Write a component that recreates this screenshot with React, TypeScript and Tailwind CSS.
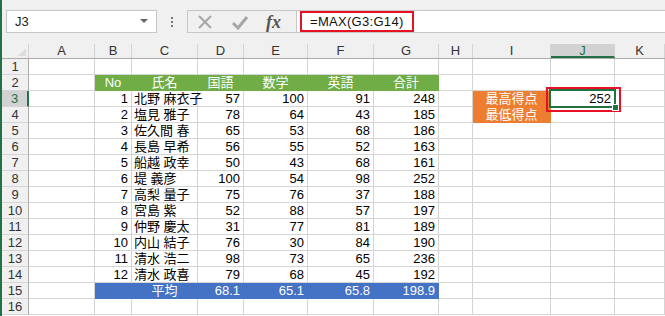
import React from "react";

const cols = [
  { key: "A", w: 66 },
  { key: "B", w: 37 },
  { key: "C", w: 66 },
  { key: "D", w: 46 },
  { key: "E", w: 64 },
  { key: "F", w: 66 },
  { key: "G", w: 65 },
  { key: "H", w: 34 },
  { key: "I", w: 78 },
  { key: "J", w: 64 },
  { key: "K", w: 50 },
];

const students: [number, string, number, number, number, number][] = [
  [1, "北野 麻衣子", 57, 100, 91, 248],
  [2, "塩見 雅子", 78, 64, 43, 185],
  [3, "佐久間 春", 65, 53, 68, 186],
  [4, "長島 早希", 56, 55, 52, 163],
  [5, "船越 政幸", 50, 43, 68, 161],
  [6, "堤 義彦", 100, 54, 98, 252],
  [7, "高梨 量子", 75, 76, 37, 188],
  [8, "宮島 紫", 52, 88, 57, 197],
  [9, "仲野 慶太", 31, 77, 81, 189],
  [10, "内山 結子", 76, 30, 84, 190],
  [11, "清水 浩二", 98, 73, 65, 236],
  [12, "清水 政喜", 79, 68, 45, 192],
];

type CellInfo = { text?: string; align?: "l" | "c" | "r"; fill?: "green" | "blue" | "orange" };

function getCell(row: number, col: string): CellInfo {
  const heads: Record<string, string> = { B: "No", C: "氏名", D: "国語", E: "数学", F: "英語", G: "合計" };
  if (row === 2 && heads[col]) return { text: heads[col], align: "c", fill: "green" };
  if (row >= 3 && row <= 14) {
    const s = students[row - 3];
    const idx = "BCDEFG".indexOf(col);
    if (idx === 1) return { text: s[1], align: "l" };
    if (idx >= 0) return { text: String(s[idx]), align: "r" };
  }
  if (row === 15) {
    const avg: Record<string, string> = { B: "", C: "平均", D: "68.1", E: "65.1", F: "65.8", G: "198.9" };
    if (col in avg) return { text: avg[col], align: col === "C" ? "c" : "r", fill: "blue" };
  }
  if (col === "I" && row === 3) return { text: "最高得点", align: "c", fill: "orange" };
  if (col === "I" && row === 4) return { text: "最低得点", align: "c", fill: "orange" };
  if (col === "J" && row === 3) return { text: "252", align: "r" };
  return {};
}

const fillCls = {
  green: "bg-[#70ad47] border-[#70ad47] text-white",
  blue: "bg-[#4472c4] border-[#4472c4] text-white",
  orange: "bg-[#ed7d31] border-[#ed7d31] text-white",
};

const alignCls = { l: "justify-start pl-[2px]", c: "justify-center", r: "justify-end pr-[3px]" };

function Toolbar() {
  return (
    <div className="h-[44px] bg-[#f0f0f0] flex items-start pt-[10px] shrink-0">
      <div className="ml-[4px] w-[151px] h-[23px] bg-white border border-[#c6c6c6] flex items-center pl-[8px] pr-[8px] text-[13px] text-[#222]">
        <span className="flex-1">J3</span>
        <svg width="8" height="5" viewBox="0 0 8 5">
          <path d="M0 0 L8 0 L4 4 Z" fill="#666" />
        </svg>
      </div>
      <div className="w-[30px] h-[23px] flex flex-col items-center justify-center gap-[2px]">
        <div className="w-[2px] h-[2px] bg-[#777]" />
        <div className="w-[2px] h-[2px] bg-[#777]" />
        <div className="w-[2px] h-[2px] bg-[#777]" />
      </div>
      <div className="w-[110px] h-[23px] border border-[#c6c6c6] flex items-center">
        <svg className="ml-[9px]" width="16" height="16" viewBox="0 0 16 16">
          <path d="M2 2 L14 14 M14 2 L2 14" stroke="#a6a6a6" strokeWidth="2" fill="none" />
        </svg>
        <svg className="ml-[18px]" width="18" height="16" viewBox="0 0 18 16">
          <path d="M2 9 L7 14 L16 3" stroke="#a6a6a6" strokeWidth="3" fill="none" />
        </svg>
        <span className="ml-[17px] font-['Liberation_Serif',serif] italic font-bold text-[18px] text-[#555] leading-none">fx</span>
      </div>
      <div className="flex-1 h-[23px] bg-white border-y border-[#c6c6c6] relative">
        <div className="absolute left-[3px] top-0 w-[114px] h-[21px] border-2 border-[#e81123]" />
        <span className="absolute left-[13px] top-[3px] text-[13px] tracking-[0.3px] leading-[15px] text-[#111]">=MAX(G3:G14)</span>
      </div>
    </div>
  );
}

function HeaderRow() {
  return (
    <div className="flex h-[15px] shrink-0 bg-[#f0f0f0] border-b border-[#ababab] text-[13px] leading-[14px] text-[#333]">
      <div className="w-[27px] shrink-0 border-r border-[#d4d4d4] flex items-end justify-end pr-[2px] pb-[2px]">
        <svg width="8" height="8" viewBox="0 0 8 8">
          <path d="M8 0 L8 8 L0 8 Z" fill="#dcdcdc" />
        </svg>
      </div>
      {cols.map((c) => (
        <div
          key={c.key}
          style={{ width: c.w }}
          className={
            c.key === "J"
              ? "shrink-0 flex justify-center bg-[#d2d2d2] text-[#217346] border-b-2 border-[#217346] border-r border-r-[#d4d4d4]"
              : "shrink-0 flex justify-center border-r border-[#d4d4d4]"
          }
        >
          {c.key}
        </div>
      ))}
    </div>
  );
}

function GridRow({ row }: { row: number }) {
  const sel = row === 3;
  return (
    <div className="flex h-[16px] shrink-0">
      <div
        className={
          sel
            ? "w-[27px] shrink-0 bg-[#d2d2d2] text-[#217346] border-r-2 border-r-[#217346] border-b border-b-[#d4d4d4] flex justify-center text-[13px] leading-[15px]"
            : "w-[27px] shrink-0 bg-[#f0f0f0] text-[#333] border-r border-r-[#ababab] border-b border-b-[#d4d4d4] flex justify-center text-[13px] leading-[15px]"
        }
      >
        {row}
      </div>
      {cols.map((c) => {
        const info = getCell(row, c.key);
        const base = "shrink-0 relative flex items-end border-r border-b whitespace-nowrap text-[13px] leading-[15px]";
        const colour = info.fill ? fillCls[info.fill] : "border-[#d4d4d4] text-black";
        return (
          <div key={c.key} style={{ width: c.w }} className={`${base} ${colour} ${alignCls[info.align ?? "l"]}`}>
            {info.text}
            {c.key === "J" && row === 3 && (
              <>
                <div className="absolute -left-[5px] -top-[4px] w-[75px] h-[25px] border-2 border-[#e81123] z-10" />
                <div className="absolute -left-[2px] -top-[2px] w-[67px] h-[19px] border-2 border-[#217346] z-20" />
                <div className="absolute left-[61px] top-[13px] w-[7px] h-[7px] bg-[#217346] border border-white z-30" />
              </>
            )}
          </div>
        );
      })}
    </div>
  );
}

export default function App() {
  const rows = Array.from({ length: 16 }, (_, i) => i + 1);
  return (
    <div className="flex w-[665px] h-[316px] overflow-hidden bg-white font-['Liberation_Sans','Noto_Sans_CJK_JP',sans-serif]">
      <div className="w-[2px] shrink-0 bg-[#217346]" />
      <div className="flex-1 flex flex-col min-w-0">
        <Toolbar />
        <HeaderRow />
        {rows.map((r) => (
          <GridRow key={r} row={r} />
        ))}
      </div>
    </div>
  );
}
